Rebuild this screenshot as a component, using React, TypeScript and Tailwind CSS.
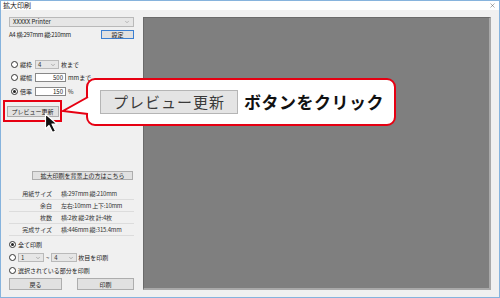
import { ChevronDown, X } from "lucide-react"

const jp = { fontFamily: '"Noto Sans CJK JP", "Noto Sans", sans-serif' }

function Radio({ on }: { on?: boolean }) {
  return (
    <span className="w-[7px] h-[7px] rounded-full border border-[#333] bg-white flex items-center justify-center shrink-0">
      {on && <span className="w-[3px] h-[3px] rounded-full bg-[#222]" />}
    </span>
  )
}

function Select({ value, w }: { value: string; w: string }) {
  return (
    <div className={`${w} h-[9px] border border-[#b9b9b9] bg-[#e6e6e6] flex items-center justify-between px-[2px]`}>
      <span className="text-[6px] leading-none text-[#333]">{value}</span>
      <ChevronDown className="w-[6px] h-[6px] text-[#777]" strokeWidth={2} />
    </div>
  )
}

function InfoRow({ label, value }: { label: string; value: string }) {
  return (
    <div className="h-[12px] flex items-center border-b border-[#dcdcdc]">
      <span className="w-[43px] text-right text-[6px] text-[#333]">{label}</span>
      <span className="ml-[9px] text-[6px] text-[#333] tracking-[-0.2px]">{value}</span>
    </div>
  )
}

export default function App() {
  return (
    <div className="relative w-[500px] h-[298px] border border-[#86b3dd] bg-[#f0f0f0] flex flex-col overflow-hidden" style={jp}>
      <div className="h-[11px] bg-white flex items-center justify-between pl-[2px] pr-[3px]">
        <span className="text-[7px] leading-none text-[#222]">拡大印刷</span>
        <X className="w-[7px] h-[7px] text-[#444]" strokeWidth={1.5} />
      </div>

      <div className="flex-1 flex pl-[8px] pr-[8px] pt-[7px] pb-[7px] gap-[9px]">
        <div className="w-[125px] flex flex-col text-[#222]">
          <div className="h-[10px] border border-[#b9b9b9] bg-[#e6e6e6] flex items-center justify-between px-[3px]">
            <span className="text-[6px] leading-none">XXXXX Printer</span>
            <ChevronDown className="w-[6px] h-[6px] text-[#888]" strokeWidth={2} />
          </div>
          <div className="mt-[3px] h-[9px] flex items-center justify-between">
            <span className="text-[6px] tracking-[-0.3px]">A4 横:297mm 縦:210mm</span>
            <div className="w-[33px] h-[9px] border border-[#3c7fd1] bg-[#e1e1e1] flex items-center justify-center text-[6px]">設定</div>
          </div>

          <div className="mt-[21px] h-[9px] flex items-center pl-[2px]">
            <Radio />
            <span className="ml-[2px] text-[6px]">縦枠</span>
            <div className="ml-[3px]"><Select value="4" w="w-[24px]" /></div>
            <span className="ml-[2px] text-[6px]">枚まで</span>
          </div>
          <div className="mt-[4px] h-[9px] flex items-center pl-[2px]">
            <Radio />
            <span className="ml-[2px] text-[6px]">縦幅</span>
            <div className="ml-[3px] w-[31px] h-[9px] border border-[#888] bg-white flex items-center justify-end pr-[2px] text-[6px]">500</div>
            <span className="ml-[2px] text-[6px]">mmまで</span>
          </div>
          <div className="mt-[5px] h-[9px] flex items-center pl-[2px]">
            <Radio on />
            <span className="ml-[2px] text-[6px]">倍率</span>
            <div className="ml-[3px] w-[31px] h-[9px] border border-[#888] bg-white flex items-center justify-end pr-[2px] text-[6px]">150</div>
            <span className="ml-[2px] text-[6px]">%</span>
          </div>

          <div className="mt-[4px] -ml-[6px] w-[59px] h-[22px] border-2 border-[#e60012] flex items-center justify-center">
            <div className="w-[52px] h-[11px] border border-[#adadad] bg-[#e1e1e1] flex items-center justify-center text-[6px]">プレビュー更新</div>
          </div>

          <div className="mt-[49px] ml-[23px] w-[101px] h-[9px] border border-[#adadad] bg-[#e1e1e1] flex items-center justify-center text-[6px]">
            拡大印刷を背景上の方はこちら
          </div>

          <div className="mt-[8px] flex flex-col">
            <InfoRow label="用紙サイズ" value="横:297mm 縦:210mm" />
            <InfoRow label="余白" value="左右:10mm 上下:10mm" />
            <InfoRow label="枚数" value="横:2枚 縦:2枚 計:4枚" />
            <InfoRow label="完成サイズ" value="横:446mm 縦:315.4mm" />
          </div>

          <div className="mt-[4px] h-[9px] flex items-center">
            <Radio on />
            <span className="ml-[2px] text-[6px]">全て印刷</span>
          </div>
          <div className="mt-[4px] h-[9px] flex items-center">
            <Radio />
            <div className="ml-[2px]"><Select value="1" w="w-[26px]" /></div>
            <span className="mx-[2px] text-[6px]">~</span>
            <Select value="4" w="w-[26px]" />
            <span className="ml-[1px] text-[6px]">枚目を印刷</span>
          </div>
          <div className="mt-[4px] h-[9px] flex items-center">
            <Radio />
            <span className="ml-[2px] text-[6px]">選択されている部分を印刷</span>
          </div>

          <div className="mt-[3px] flex justify-between">
            <div className="w-[53px] h-[12px] border border-[#adadad] bg-[#e1e1e1] flex items-center justify-center text-[6px]">戻る</div>
            <div className="w-[57px] h-[12px] border border-[#adadad] bg-[#e1e1e1] flex items-center justify-center text-[6px]">印刷</div>
          </div>
        </div>

        <div className="flex-1 bg-[#7f7f7f] border-t border-l border-[#6a6a6a] border-r-2 border-b-2 border-r-[#a9a9a9] border-b-[#a9a9a9]" />
      </div>

      {/* callout */}
      <div className="absolute left-[85px] top-[77px] w-[310px] h-[48px] bg-white border-2 border-[#e60012] rounded-[9px] flex items-center pl-[12px]">
        <div className="w-[138px] h-[24px] border border-[#b5b5b5] bg-[#e4e4e4] flex items-center justify-center text-[15px] text-[#3a3a3a] tracking-[1px]">
          プレビュー更新
        </div>
        <span className="ml-[6px] text-[17px] font-bold text-[#111] tracking-[0.5px]">ボタンをクリック</span>
      </div>
      <svg className="absolute left-[60px] top-[94px]" width="30" height="22" viewBox="0 0 30 22">
        <path d="M27 2 L2 16 L27 19" fill="white" stroke="#e60012" strokeWidth="2" strokeLinejoin="miter" />
        <rect x="27" y="3" width="4" height="15" fill="white" />
      </svg>

      {/* cursor */}
      <svg className="absolute left-[43px] top-[112px]" width="18" height="22" viewBox="0 0 18 22">
        <path d="M1.5 1 L1.5 16 L5 12.5 L8.5 19.5 L11.5 18 L8 11 L13 11 Z" fill="#111" stroke="white" strokeWidth="1.2" strokeLinejoin="round" />
      </svg>
    </div>
  )
}
